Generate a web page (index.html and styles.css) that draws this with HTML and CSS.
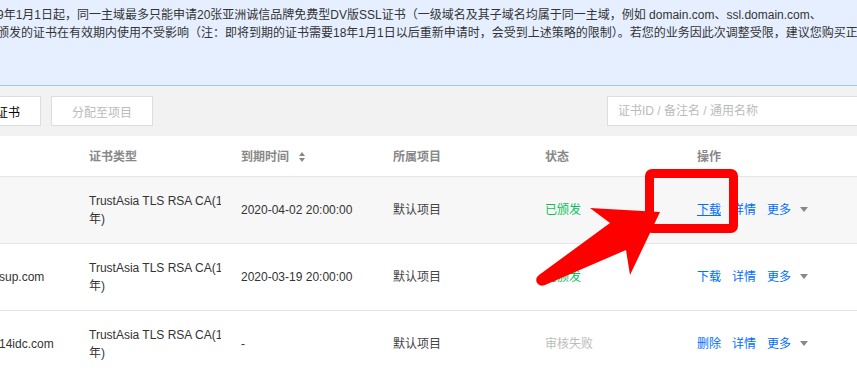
FILE: index.html
```html
<!DOCTYPE html>
<html lang="zh-CN">
<head>
  <meta charset="UTF-8" />
  <meta name="viewport" content="width=device-width, initial-scale=1.0"/>
  <title>SSL证书管理</title>
  <link rel="stylesheet" href="styles.css">
</head>
<body>

<div class="page">
  <!-- 公告 -->
  <div class="notice">
    <p class="notice-line">9年1月1日起，同一主域最多只能申请20张亚洲诚信品牌免费型DV版SSL证书（一级域名及其子域名均属于同一主域，例如 domain.com、ssl.domain.com、</p>
    <p class="notice-line">颁发的证书在有效期内使用不受影响（注：即将到期的证书需要18年1月1日以后重新申请时，会受到上述策略的限制）。若您的业务因此次调整受限，建议您购买正式版证书。</p>
  </div>

  <!-- 工具栏 -->
  <div class="toolbar">
    <div class="toolbar-left">
      <button class="btn">上传证书</button>
      <button class="btn disabled">分配至项目</button>
    </div>
    <input class="search" type="text" placeholder="证书ID / 备注名 / 通用名称">
  </div>

  <!-- 证书列表 -->
  <table class="cert-table">
    <colgroup>
      <col class="col-domain">
      <col class="col-std">
      <col class="col-std">
      <col class="col-std">
      <col class="col-std">
      <col>
    </colgroup>
    <thead>
      <tr>
        <th>域名</th>
        <th>证书类型</th>
        <th>到期时间 <span class="sort"></span></th>
        <th>所属项目</th>
        <th>状态</th>
        <th>操作</th>
      </tr>
    </thead>
    <tbody>
      <tr class="hover">
        <td></td>
        <td>TrustAsia TLS RSA CA(1<br>年)</td>
        <td>2020-04-02 20:00:00</td>
        <td class="muted">默认项目</td>
        <td class="ok">已颁发</td>
        <td>
          <div class="actions">
            <a class="active">下载</a><a>详情</a><a>更多</a><span class="caret"></span>
          </div>
        </td>
      </tr>
      <tr>
        <td>www.abcsup.com</td>
        <td>TrustAsia TLS RSA CA(1<br>年)</td>
        <td>2020-03-19 20:00:00</td>
        <td class="muted">默认项目</td>
        <td class="ok">已颁发</td>
        <td>
          <div class="actions">
            <a>下载</a><a>详情</a><a>更多</a><span class="caret"></span>
          </div>
        </td>
      </tr>
      <tr>
        <td>www.abc14idc.com</td>
        <td>TrustAsia TLS RSA CA(1<br>年)</td>
        <td>-</td>
        <td class="muted">默认项目</td>
        <td class="fail">审核失败</td>
        <td>
          <div class="actions">
            <a>删除</a><a>详情</a><a>更多</a><span class="caret"></span>
          </div>
        </td>
      </tr>
    </tbody>
  </table>
</div>

<!-- 标注：红框 + 箭头 -->
<div class="mark-box"></div>
<svg class="mark-arrow" width="857" height="375" viewBox="0 0 857 375">
  <polygon points="590,208 660,212 630,275 626,250 545,285 539,275 610,223" fill="#ff0000"/>
  <circle cx="542" cy="280" r="5.8" fill="#ff0000"/>
</svg>

</body>
</html>
```

FILE: styles.css
```css
* { box-sizing: border-box; }
html, body {
  margin: 0;
  overflow: hidden;
}
body {
  width: 857px;
  height: 375px;
  position: relative;
  font-family: "Liberation Sans", "Noto Sans CJK SC", sans-serif;
  font-size: 12px;
  color: #333;
  background: #fff;
}

/* 页面被横向滚动了一段 */
.page {
  width: 1000px;
  margin-left: -69px;
}

.notice {
  height: 86px;
  padding: 6px 0 0 66px;
  background: #e5efff;
  border-bottom: 1px solid #a4c6f5;
  overflow: hidden;
}

.notice-line {
  margin: 0;
  line-height: 18px;
  white-space: nowrap;
  color: #333;
}

.toolbar {
  display: flex;
  align-items: center;
  justify-content: space-between;
  height: 50px;
  padding: 0 20px;
  background: #f2f2f2;
}

.toolbar-left {
  display: flex;
  gap: 10px;
}

.btn {
  height: 30px;
  padding: 0 20px;
  border: 1px solid #ddd;
  background: #fff;
  color: #000;
  font-family: inherit;
  font-size: 12px;
}

.btn.disabled {
  color: #bbb;
}

.search {
  width: 304px;
  height: 30px;
  padding: 0 10px;
  border: 1px solid #ddd;
  background: #fff;
  font-family: inherit;
  font-size: 12px;
  outline: none;
}

.search::placeholder {
  color: #bbb;
}

.cert-table {
  width: 100%;
  table-layout: fixed;
  border-collapse: collapse;
}

.col-domain { width: 138px; }
.col-std { width: 152px; }

.cert-table th,
.cert-table td {
  padding: 0 20px;
  text-align: left;
  border-bottom: 1px solid #e5e5e5;
  white-space: nowrap;
  overflow: hidden;
}

.cert-table th {
  height: 40px;
  color: #888;
  font-weight: bold;
}

.cert-table td {
  height: 67px;
  line-height: 18px;
  color: #333;
}

.cert-table tr.hover td {
  background: #f7f7f7;
}

.cert-table td.muted { color: #444; }
.cert-table td.ok { color: #0abf5b; }
.cert-table td.fail { color: #bbb; }

.sort {
  display: inline-block;
  position: relative;
  width: 7px;
  height: 10px;
  margin-left: 7px;
  vertical-align: -1px;
}

.sort::before,
.sort::after {
  content: "";
  position: absolute;
  left: 0;
  border-left: 3.5px solid transparent;
  border-right: 3.5px solid transparent;
}

.sort::before {
  top: 0;
  border-bottom: 4px solid #888;
}

.sort::after {
  bottom: 0;
  border-top: 4px solid #888;
}

.actions {
  display: flex;
  align-items: center;
  gap: 11px;
}

.actions a {
  color: #006eff;
  cursor: pointer;
}

.actions a.active {
  text-decoration: underline;
}

.caret {
  width: 0;
  height: 0;
  margin-left: -2px;
  border-left: 4px solid transparent;
  border-right: 4px solid transparent;
  border-top: 5px solid #888;
}

.mark-box {
  position: absolute;
  left: 645px;
  top: 169px;
  width: 93px;
  height: 64px;
  border: 9px solid #ff0000;
  border-radius: 7px;
}

.mark-arrow {
  position: absolute;
  left: 0;
  top: 0;
}
```
